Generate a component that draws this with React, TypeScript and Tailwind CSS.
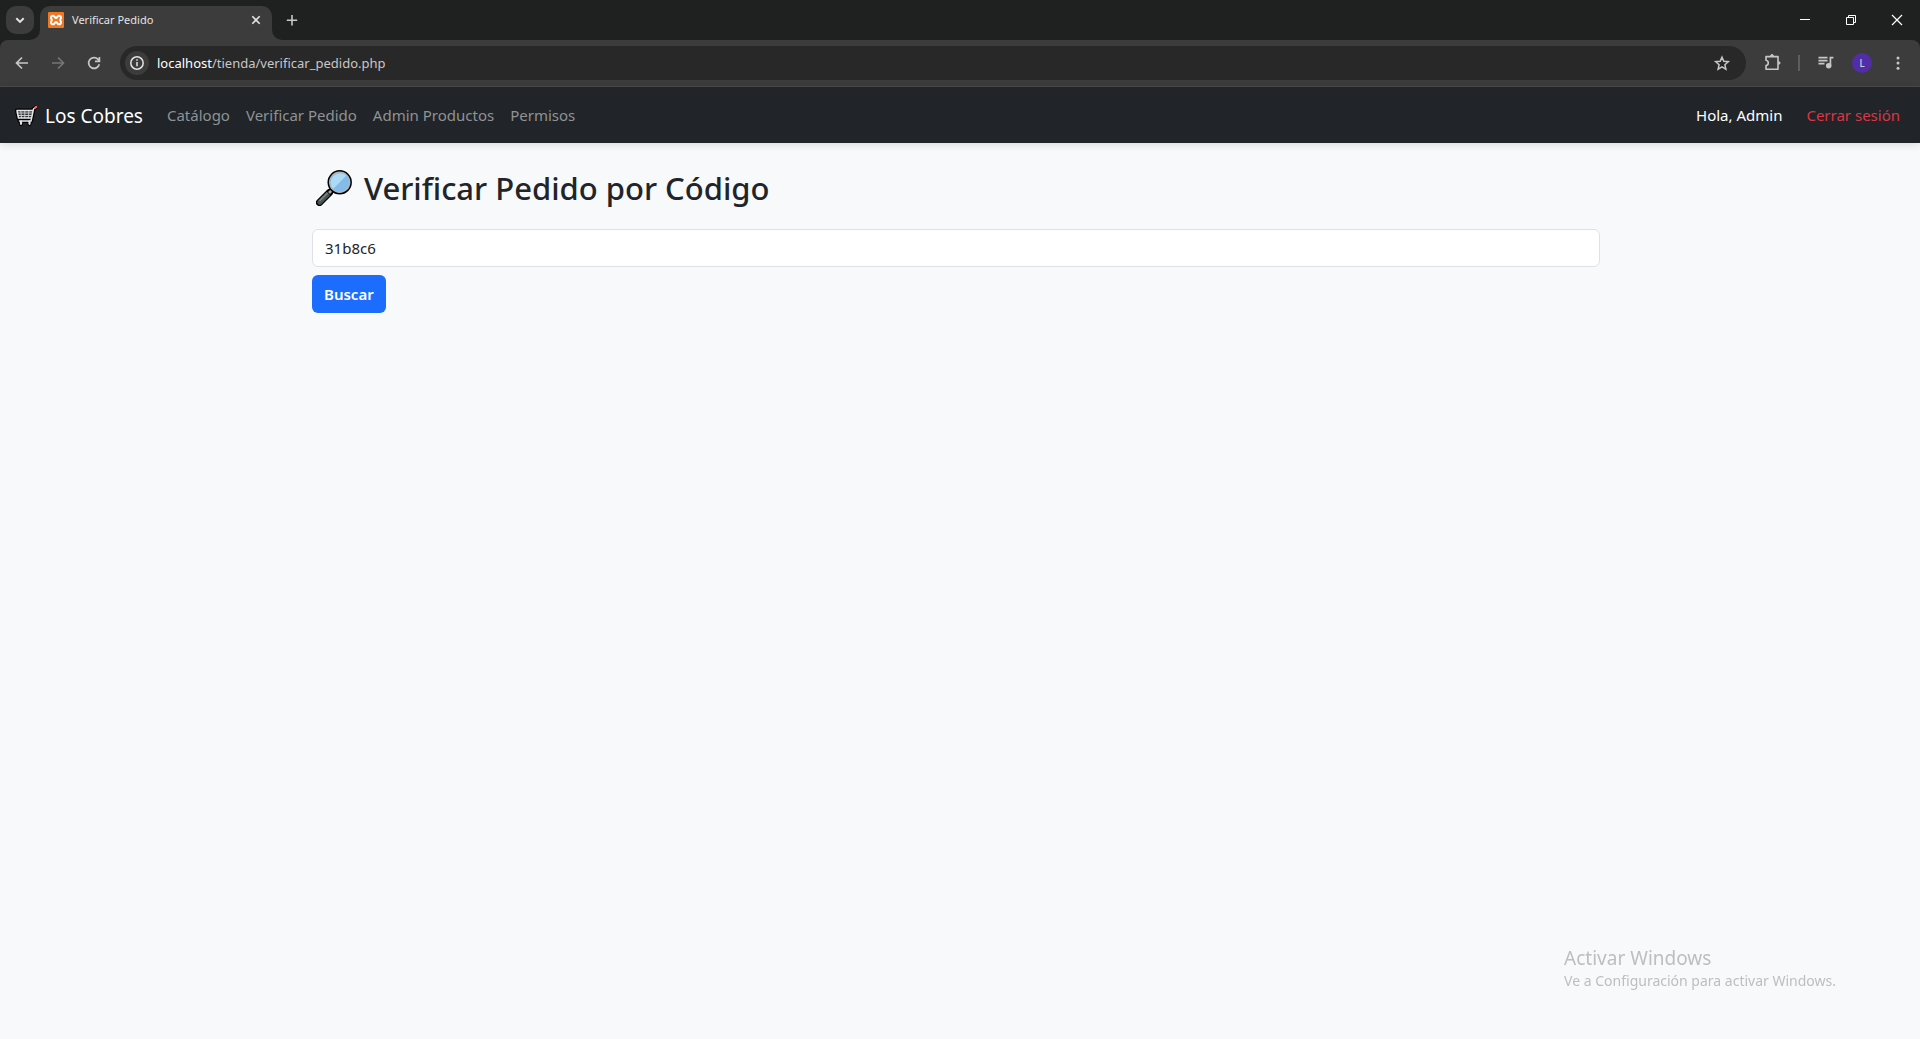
import { useState, type ReactNode } from "react";

const links = ["Catálogo", "Verificar Pedido", "Admin Productos", "Permisos"];

function IconButton({ label, className = "", children }: { label: string; className?: string; children: ReactNode }) {
  return (
    <button type="button" aria-label={label} className={`flex shrink-0 items-center justify-center ${className}`}>
      {children}
    </button>
  );
}

function XamppIcon() {
  return (
    <svg viewBox="0 0 16 16" className="size-4 shrink-0" aria-hidden="true">
      <rect width="16" height="16" rx="1" fill="#f37623" />
      <path
        d="M5.200 3.700c1.500 0 1.400 2.300 2.800 2.300s1.300-2.300 2.800-2.300c1.400 0 2.200.9 2.200 2.100 0 1-.8 1.300-.8 2.200s.8 1.200.8 2.200c0 1.200-.8 2.100-2.200 2.100-1.500 0-1.400-2.300-2.800-2.300s-1.300 2.300-2.800 2.300C3.800 12.300 3 11.400 3 10.200c0-1 .8-1.300.8-2.200S3 6.800 3 5.800c0-1.200.8-2.100 2.200-2.100z"
        fill="none"
        stroke="#fff"
        strokeWidth="2"
      />
    </svg>
  );
}

function CartIcon() {
  return (
    <svg viewBox="0 0 24 24" className="size-6 shrink-0" fill="none" strokeLinejoin="round" strokeLinecap="round" aria-hidden="true">
      <g stroke="#000" strokeWidth="4">
        <path d="M21.500 3.500l-2 1.500L17 17H5.500M3 6.500h16l-1.500 7.500H4.500z" />
        <path d="M7 17v3M15.500 17v3" />
      </g>
      <path d="M3 6.500h16l-1.500 7.500H4.500z" fill="#33373a" />
      <path d="M3 9h15.500M3.800 11.500h14.200M6.800 6.500l.7 7.500M10.800 6.500V14M14.900 6.500l-.6 7.500" stroke="#c3c7c9" strokeWidth="1" />
      <path d="M20.700 4l-1.200 1L17 17H5.500M3 6.500h16M4.500 14h13M3 6.500L4.500 14" stroke="#e3e5e6" strokeWidth="1.500" />
      <path d="M21 3.700l1.200-.7" stroke="#ef6a5f" strokeWidth="2.200" />
      <path d="M7 17.500v2.300M15.500 17.500v2.300" stroke="#e3e5e6" strokeWidth="2.200" />
    </svg>
  );
}

function MagnifierIcon() {
  return (
    <svg viewBox="0 0 36 36" className="size-9 shrink-0" aria-hidden="true">
      <path d="M13.500 22.500L3.500 32.500" stroke="#000" strokeWidth="7.200" strokeLinecap="round" />
      <path d="M12.500 23.500L3.700 32.300" stroke="#4b5355" strokeWidth="4.800" strokeLinecap="round" />
      <path d="M11.500 23L4 30.500" stroke="#7b8587" strokeWidth="1.700" strokeLinecap="round" />
      <path d="M12.500 23.500l3.500-3.500" stroke="#000" strokeWidth="5" />
      <path d="M13 23l3.500-3.500" stroke="#9da5a8" strokeWidth="2.600" />
      <circle cx="23.700" cy="12.300" r="12.200" fill="#000" />
      <circle cx="23.700" cy="12.300" r="10.700" fill="#b0b7ba" />
      <circle cx="23.700" cy="12.300" r="9.500" fill="#83bce9" />
      <path d="M17 19A9.500 9.500 0 0 1 30.400 5.600z" fill="#addaf4" />
    </svg>
  );
}

function TabStrip() {
  return (
    <div className="flex h-10 bg-[#1f2120]">
      <IconButton label="Buscar pestañas" className="mt-1.5 ml-1.5 size-7 rounded-[10px] bg-[#3c3c3c] text-[#e3e3e3]">
        <svg viewBox="0 0 28 28" className="size-7" fill="none" stroke="currentColor" strokeWidth="2">
          <path d="M10.300 12.200l3.700 3.700 3.700-3.700" />
        </svg>
      </IconButton>
      <div className="relative mt-1.5 ml-1.5 flex w-58 items-center rounded-t-[10px] bg-[#3c3c3c] pr-2 pb-1.5 pl-2">
        <svg viewBox="0 0 10 10" className="absolute bottom-0 -left-2.5 size-2.5" fill="#3c3c3c" aria-hidden="true">
          <path d="M10 0v10H0A10 10 0 0 0 10 0z" />
        </svg>
        <svg viewBox="0 0 10 10" className="absolute -right-2.5 bottom-0 size-2.5" fill="#3c3c3c" aria-hidden="true">
          <path d="M0 0v10h10A10 10 0 0 1 0 0z" />
        </svg>
        <XamppIcon />
        <span className="ml-2 flex-1 text-[11px] leading-4 text-[#e3e3e3]">Verificar Pedido</span>
        <IconButton label="Cerrar pestaña" className="size-4 text-[#e3e3e3]">
          <svg viewBox="0 0 16 16" className="size-4" fill="none" stroke="currentColor" strokeWidth="1.600">
            <path d="M4.300 4.300l7.400 7.400M11.700 4.300l-7.400 7.400" />
          </svg>
        </IconButton>
      </div>
      <IconButton label="Nueva pestaña" className="mt-1.5 ml-1.5 size-7 text-[#c7c7c7]">
        <svg viewBox="0 0 28 28" className="size-7" fill="none" stroke="currentColor" strokeWidth="1.600">
          <path d="M14 9v10.400M8.800 14.200h10.400" />
        </svg>
      </IconButton>
      <div className="ml-auto flex text-white">
        <IconButton label="Minimizar" className="w-[46px]">
          <svg viewBox="0 0 12 12" className="size-3" stroke="currentColor">
            <path d="M1 5.500h10" />
          </svg>
        </IconButton>
        <IconButton label="Restaurar" className="w-[46px]">
          <svg viewBox="0 0 12 12" className="size-3" fill="none" stroke="currentColor">
            <path d="M1.500 3.500h7v7h-7zM3.500 3.500v-2h7v7h-2" />
          </svg>
        </IconButton>
        <IconButton label="Cerrar" className="w-[46px]">
          <svg viewBox="0 0 12 12" className="size-3" stroke="currentColor" strokeWidth="1.200">
            <path d="M1 1l10 10M11 1L1 11" />
          </svg>
        </IconButton>
      </div>
    </div>
  );
}

function Toolbar() {
  return (
    <div className="bg-[#1f2120]">
      <div className="flex h-[47px] items-center rounded-t-lg border-b border-[#4a4a4a] bg-[#3c3c3c] pr-2 pl-2 text-[#c7c7c7]">
        <IconButton label="Atrás" className="size-7">
          <svg viewBox="0 0 28 28" className="size-7" fill="none" stroke="currentColor" strokeWidth="1.700">
            <path d="M20 14H9M14 8.500L8.500 14l5.500 5.500" />
          </svg>
        </IconButton>
        <IconButton label="Adelante" className="ml-2 size-7 text-[#757575]">
          <svg viewBox="0 0 28 28" className="size-7" fill="none" stroke="currentColor" strokeWidth="1.700">
            <path d="M8 14h11M14 8.500l5.500 5.500-5.500 5.500" />
          </svg>
        </IconButton>
        <IconButton label="Recargar" className="ml-2 size-7">
          <svg viewBox="0 0 28 28" className="size-7" fill="none" stroke="currentColor" strokeWidth="1.700">
            <path d="M19.300 15.300A5.400 5.400 0 1 1 18 10.300l1.300 1.500M19.400 8v4.300H15" />
          </svg>
        </IconButton>
        <div className="ml-3 flex h-[34px] flex-1 items-center rounded-full bg-[#282828] pr-2.5 pl-[5px]">
          <IconButton label="Información del sitio" className="size-6 rounded-full bg-[#3c3c3c] text-[#e3e3e3]">
            <svg viewBox="0 0 24 24" className="size-6" fill="none" stroke="currentColor" strokeWidth="1.500">
              <circle cx="12" cy="12" r="6.200" />
              <path d="M12 11v4.300M12 8.200v1.600" />
            </svg>
          </IconButton>
          <a href="#" className="ml-2 flex-1 text-[13px] leading-5 text-[#c7c7c7]">
            <span className="text-white">localhost</span>/tienda/verificar_pedido.php
          </a>
          <IconButton label="Añadir a marcadores" className="size-7">
            <svg viewBox="0 0 28 28" className="size-7" fill="none" stroke="currentColor" strokeWidth="1.500">
              <path d="M14 8.200l1.800 4.100 4.500.4-3.400 3 1 4.400-3.900-2.300-3.900 2.300 1-4.400-3.400-3 4.500-.4z" />
            </svg>
          </IconButton>
        </div>
        <IconButton label="Extensiones" className="ml-3 size-7">
          <svg viewBox="0 0 28 28" className="size-7" fill="none" stroke="currentColor" strokeWidth="1.600" strokeLinejoin="round">
            <path d="M8 7.600h12v12.600H8v-3.700c3-.6 3-4.600 0-5.200z" />
            <path d="M12.500 7c0-2.200 3-2.200 3 0zM20.500 12.400c2.200 0 2.200 3 0 3z" fill="currentColor" strokeWidth=".6" />
          </svg>
        </IconButton>
        <span className="ml-3 h-4 w-0.5 bg-[#5e5e5e]" />
        <IconButton label="Controles multimedia" className="ml-3 size-7">
          <svg viewBox="0 0 28 28" className="size-7" fill="none" stroke="currentColor" strokeWidth="1.700">
            <path d="M6.500 8.700h9M6.500 11.700h9M6.500 14.700h6M18.400 17V8.700h3" />
            <circle cx="16.700" cy="16.800" r="1.900" fill="currentColor" />
          </svg>
        </IconButton>
        <IconButton label="Perfil" className="ml-3 size-5 rounded-full bg-[#512da8] text-[10px] leading-5 text-[#e3e3e3]">
          L
        </IconButton>
        <IconButton label="Menú" className="ml-3 size-7">
          <svg viewBox="0 0 28 28" className="size-7" fill="currentColor">
            <circle cx="14" cy="9" r="1.500" />
            <circle cx="14" cy="14" r="1.500" />
            <circle cx="14" cy="19.200" r="1.500" />
          </svg>
        </IconButton>
      </div>
    </div>
  );
}

function Navbar() {
  return (
    <nav className="relative flex h-14 items-center bg-[#212529] px-5 text-[15px] leading-6 shadow-[0_2px_8px_rgba(0,0,0,0.12)]">
      <a href="#" className="-ml-1.5 flex items-center gap-[7px] pt-0.5 text-[19px] leading-[30px] text-white">
        <CartIcon />
        Los Cobres
      </a>
      <div className="ml-6 flex gap-4 text-[#909294]">
        {links.map((link) => (
          <a key={link} href="#">
            {link}
          </a>
        ))}
      </div>
      <div className="ml-auto flex gap-6">
        <span className="text-white">Hola, Admin</span>
        <a href="#" className="text-[#dc3545]">
          Cerrar sesión
        </a>
      </div>
    </nav>
  );
}

export default function App() {
  const [code, setCode] = useState("31b8c6");

  return (
    <div className="flex min-h-screen flex-col bg-[#f8f9fa] font-['Segoe_UI','Noto_Sans',sans-serif]">
      <header>
        <TabStrip />
        <Toolbar />
        <Navbar />
      </header>
      <main className="flex-1 px-6 pt-6 pr-8">
        <div className="mx-auto max-w-[1288px]">
          <h1 className="mb-5 flex items-center gap-3 pl-1 text-[31px] leading-[42px] font-medium text-[#212529]">
            <MagnifierIcon />
            Verificar Pedido por Código
          </h1>
          <form onSubmit={(event) => event.preventDefault()}>
            <input
              type="text"
              aria-label="Código del pedido"
              value={code}
              onChange={(event) => setCode(event.target.value)}
              className="block h-[38px] w-full rounded-md border border-[#dee2e6] bg-white px-3 text-[15px] leading-6 text-[#212529] outline-none"
            />
            <button type="submit" className="mt-2 h-[38px] rounded-md bg-[#1c6dfd] px-3 text-[15px] leading-6 font-semibold text-white">
              Buscar
            </button>
          </form>
        </div>
      </main>
      <aside className="pointer-events-none fixed right-[84px] bottom-12 text-[#bcbec0]">
        <p className="text-[19px] leading-[26px]">Activar Windows</p>
        <p className="text-[14px] leading-5">Ve a Configuración para activar Windows.</p>
      </aside>
    </div>
  );
}
